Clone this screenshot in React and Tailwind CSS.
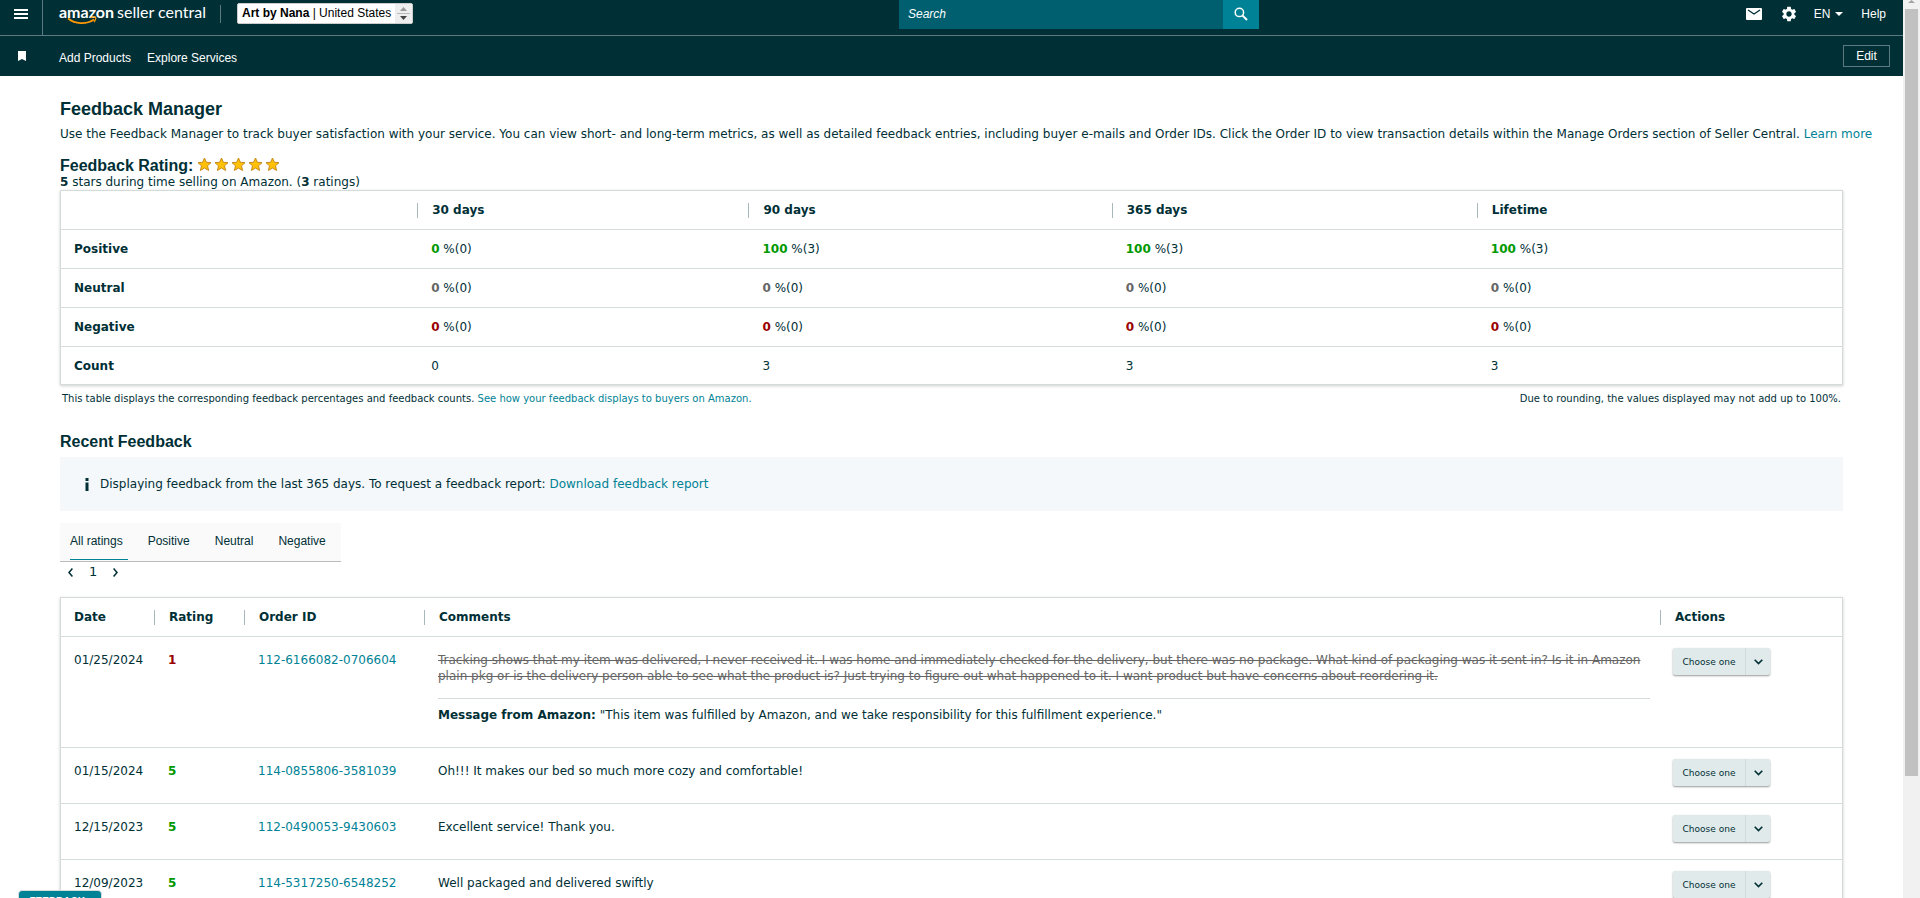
import React, { useState } from "react";
import { clsx } from "clsx";

const periods = ["30 days", "90 days", "365 days", "Lifetime"];

const metrics = [
  { label: "Positive", tone: "text-[#009900]", values: [["0", "0"], ["100", "3"], ["100", "3"], ["100", "3"]] },
  { label: "Neutral", tone: "text-[#666666]", values: [["0", "0"], ["0", "0"], ["0", "0"], ["0", "0"]] },
  { label: "Negative", tone: "text-[#990000]", values: [["0", "0"], ["0", "0"], ["0", "0"], ["0", "0"]] },
];

const counts = ["0", "3", "3", "3"];

const filters = ["All ratings", "Positive", "Neutral", "Negative"];

const feedback = [
  {
    date: "01/25/2024",
    rating: 1,
    order: "112-6166082-0706604",
    comment:
      "Tracking shows that my item was delivered, I never received it. I was home and immediately checked for the delivery, but there was no package. What kind of packaging was it sent in? Is it in Amazon plain pkg or is the delivery person able to see what the product is? Just trying to figure out what happened to it. I want product but have concerns about reordering it.",
    message: '"This item was fulfilled by Amazon, and we take responsibility for this fulfillment experience."',
  },
  { date: "01/15/2024", rating: 5, order: "114-0855806-3581039", comment: "Oh!!! It makes our bed so much more cozy and comfortable!" },
  { date: "12/15/2023", rating: 5, order: "112-0490053-9430603", comment: "Excellent service! Thank you." },
  { date: "12/09/2023", rating: 5, order: "114-5317250-6548252", comment: "Well packaged and delivered swiftly" },
];

function Logo() {
  return (
    <a href="#" aria-label="amazon seller central" className="relative flex items-baseline gap-[3px] h-6 text-white text-[16px] leading-6 font-['Lato',sans-serif]">
      <span className="font-bold">amazon</span>
      <span>seller central</span>
      <svg className="absolute left-2 top-4 w-8 h-2.5" viewBox="0 0 32 10" fill="none" stroke="#ff9900">
        <path d="M1 2.5C8 8 19 9 27 3.5" strokeWidth="1.6" />
        <path d="M23.5 1.6C26 .8 28 .8 28.5 1.6C29 2.5 28.2 4.6 27 6" strokeWidth="1.3" />
      </svg>
    </a>
  );
}

function Header() {
  return (
    <header className="bg-[#002f36] text-white text-[12px] font-['Liberation_Sans',Arial,sans-serif]">
      <div className="flex h-9 border-b border-[#5c7a7f]">
        <div className="flex w-[899px] shrink">
          <button aria-label="Menu" className="flex flex-col items-center justify-center gap-[2px] w-[43px] pb-2 border-r border-[#5c7a7f]">
            <span className="w-3.5 h-[2px] bg-white" />
            <span className="w-3.5 h-[2px] bg-white" />
            <span className="w-3.5 h-[2px] bg-white" />
          </button>
          <div className="flex items-start pl-4">
            <Logo />
            <span className="ml-3.5 mt-[5px] w-px h-[18px] bg-[#5c7a7f]" />
            <button className="ml-4 mt-[3px] flex items-stretch h-[21px] bg-white text-black rounded-[2px] border border-[#cccccc] overflow-hidden whitespace-nowrap">
              <span className="px-1 leading-[19px]">
                <b>Art by Nana</b> | United States
              </span>
              <span className="flex flex-col items-center justify-center w-[17px] bg-[#eeeeee]">
                <svg className="w-[13px] h-[15px]" viewBox="0 0 13 15">
                  <path d="M3 5L6.5 1L10 5Z" fill="#999" />
                  <path d="M0 7.5H13" stroke="#bbb" />
                  <path d="M3 10L6.5 14L10 10Z" fill="#444" />
                </svg>
              </span>
            </button>
          </div>
        </div>

        <form className="flex w-[360px] h-[29px] shrink-0">
          <input
            type="text"
            aria-label="Search"
            placeholder="Search"
            className="flex-1 min-w-0 pl-[9px] pb-[2px] bg-[#005f6e] italic placeholder:text-white outline-none"
          />
          <button type="button" aria-label="Submit search" className="flex items-center justify-center w-9 pb-[2px] bg-[#008296]">
            <svg className="w-3.5 h-3.5" viewBox="0 0 14 14" fill="none" stroke="white">
              <circle cx="5.4" cy="5.4" r="4.2" strokeWidth="1.5" />
              <path d="M8.6 8.6L13 13" strokeWidth="2" />
            </svg>
          </button>
        </form>

        <div className="flex items-center h-[28px] ml-auto pr-[17px]">
          <a href="#" aria-label="Messages">
            <svg className="w-4 h-3" viewBox="0 0 16 12">
              <rect width="16" height="12" rx="1" fill="white" />
              <path d="M2 2L8 6L14 2" fill="none" stroke="#002f36" strokeWidth="1.3" />
            </svg>
          </a>
          <a href="#" aria-label="Settings" className="ml-[18px]">
            <svg className="w-[18px] h-[18px]" viewBox="0 0 24 24" fill="white">
              <path d="M19.14 12.94c.04-.3.06-.61.06-.94 0-.32-.02-.64-.07-.94l2.03-1.58c.18-.14.23-.41.12-.61l-1.92-3.32c-.12-.22-.37-.29-.59-.22l-2.39.96c-.5-.38-1.03-.7-1.62-.94l-.36-2.54c-.04-.24-.24-.41-.48-.41h-3.84c-.24 0-.43.17-.47.41l-.36 2.54c-.59.24-1.13.57-1.62.94l-2.39-.96c-.22-.08-.47 0-.59.22L2.74 8.87c-.12.21-.08.47.12.61l2.03 1.58c-.05.3-.09.63-.09.94s.02.64.07.94l-2.03 1.58c-.18.14-.23.41-.12.61l1.92 3.32c.12.22.37.29.59.22l2.39-.96c.5.38 1.03.7 1.62.94l.36 2.54c.05.24.24.41.48.41h3.84c.24 0 .44-.17.47-.41l.36-2.54c.59-.24 1.13-.56 1.62-.94l2.39.96c.22.08.47 0 .59-.22l1.92-3.32c.12-.22.07-.47-.12-.61l-2.01-1.58zM12 15.6c-1.98 0-3.6-1.62-3.6-3.6s1.62-3.6 3.6-3.6 3.6 1.62 3.6 3.6-1.62 3.6-3.6 3.6z" />
            </svg>
          </a>
          <button className="ml-4 flex items-center gap-[5px]">
            EN
            <svg className="w-2 h-1" viewBox="0 0 8 4" fill="white">
              <path d="M0 0H8L4 4Z" />
            </svg>
          </button>
          <a href="#" className="ml-[18px]">Help</a>
        </div>
      </div>

      <div className="flex items-center h-10 pr-[13px]">
        <button aria-label="Bookmarks" className="w-[43px] flex justify-center">
          <svg className="w-2 h-2.5" viewBox="0 0 8 10" fill="white">
            <path d="M0 0H8V10L4 8L0 10Z" />
          </svg>
        </button>
        <nav className="flex gap-4 pl-4 pt-1">
          <a href="#">Add Products</a>
          <a href="#">Explore Services</a>
        </nav>
        <button className="ml-auto w-[47px] h-[22px] border border-[#5c7a7f]">Edit</button>
      </div>
    </header>
  );
}

function Star() {
  return (
    <svg className="w-[15px] h-[15px]" viewBox="0 0 15 15">
      <path
        d="M7.5 1L9.4 5.3L14 5.7L10.5 8.8L11.6 13.5L7.5 11L3.4 13.5L4.5 8.8L1 5.7L5.6 5.3Z"
        fill="#ffc107"
        stroke="#c98a1b"
        strokeLinejoin="round"
      />
    </svg>
  );
}

function HeadCell({ children, className, first }) {
  return (
    <th scope="col" className={clsx("h-[38px] p-0 text-left font-bold", className)}>
      <div className={clsx("flex items-center h-[15px] leading-[15px]", first ? "pl-[13px]" : "pl-[14px] border-l border-[#a9b8ba]")}>{children}</div>
    </th>
  );
}

function RatingSummary() {
  return (
    <table className="w-full table-fixed border border-[#d5dbdb] shadow-[0_1px_3px_rgba(0,0,0,0.2)] border-separate border-spacing-0">
      <thead>
        <tr>
          <th className="w-[20%]" />
          <HeadCell className="w-[18.6%]">{periods[0]}</HeadCell>
          <HeadCell className="w-[20.4%]">{periods[1]}</HeadCell>
          <HeadCell className="w-[20.5%]">{periods[2]}</HeadCell>
          <HeadCell>{periods[3]}</HeadCell>
        </tr>
      </thead>
      <tbody>
        {metrics.map((m) => (
          <tr key={m.label}>
            <th scope="row" className="h-[39px] pl-[13px] text-left font-bold border-t border-[#d5dbdb]">{m.label}</th>
            {m.values.map(([pct, n], i) => (
              <td key={i} className="pl-[14px] border-t border-[#d5dbdb]">
                <b className={m.tone}>{pct}</b> %({n})
              </td>
            ))}
          </tr>
        ))}
        <tr>
          <th scope="row" className="h-[38px] pl-[13px] text-left font-bold border-t border-[#d5dbdb]">Count</th>
          {counts.map((c, i) => (
            <td key={i} className="pl-[14px] border-t border-[#d5dbdb]">{c}</td>
          ))}
        </tr>
      </tbody>
    </table>
  );
}

function ActionButton() {
  return (
    <div className="inline-flex h-[27px] rounded-[2px] bg-[#e1eaea] shadow-[0_1px_2px_rgba(0,0,0,0.4)] text-[9px] align-top">
      <button className="w-[72px] text-center">Choose one</button>
      <button aria-label="Show actions" className="flex items-center justify-center w-[25px] border-l border-[#cfdada]">
        <svg className="w-[9px] h-[6px]" viewBox="0 0 9 6" fill="none" stroke="#002f36" strokeWidth="1.6">
          <path d="M.7 .8L4.5 4.6L8.3 .8" />
        </svg>
      </button>
    </div>
  );
}

function FeedbackTable() {
  return (
    <table className="w-full table-fixed border border-[#d5dbdb] shadow-[0_1px_3px_rgba(0,0,0,0.2)] border-separate border-spacing-0">
      <thead>
        <tr>
          <HeadCell first className="w-[93px]">Date</HeadCell>
          <HeadCell className="w-[90px]">Rating</HeadCell>
          <HeadCell className="w-[180px]">Order ID</HeadCell>
          <HeadCell>Comments</HeadCell>
          <HeadCell className="w-[182px]">Actions</HeadCell>
        </tr>
      </thead>
      <tbody className="align-top">
        {feedback.map((f) => (
          <tr key={f.order}>
            <td className="pt-[15px] pl-[13px] border-t border-[#d5dbdb]">{f.date}</td>
            <td className={clsx("pt-[15px] pl-[14px] border-t border-[#d5dbdb] font-bold", f.rating > 3 ? "text-[#009900]" : "text-[#990000]")}>{f.rating}</td>
            <td className="pt-[15px] pl-[14px] border-t border-[#d5dbdb]">
              <a href="#" className="text-[#008296]">{f.order}</a>
            </td>
            <td className="pt-[15px] pl-[14px] pr-[10px] border-t border-[#d5dbdb]">
              {f.message ? (
                <>
                  <p className="line-through text-[#666666]">{f.comment}</p>
                  <p className="mt-3.5 pt-2 pb-6 border-t border-[#d5dbdb]">
                    <b>Message from Amazon:</b> {f.message}
                  </p>
                </>
              ) : (
                <p>{f.comment}</p>
              )}
            </td>
            <td className="pt-[11px] pb-[17px] pl-[13px] border-t border-[#d5dbdb]">
              <ActionButton />
            </td>
          </tr>
        ))}
      </tbody>
    </table>
  );
}

export default function App() {
  const [filter, setFilter] = useState("All ratings");

  return (
    <div className="flex h-screen overflow-hidden bg-white text-[#002f36] text-[12px] leading-4 font-['DejaVu_Sans',Verdana,sans-serif]">
      <div className="flex-1 min-w-0">
        <Header />

        <main className="px-[60px]">
          <h1 className="pt-[22px] text-[18px] leading-[22px] font-bold font-['Liberation_Sans',Arial,sans-serif]">Feedback Manager</h1>
          <p className="mt-1.5 whitespace-nowrap">
            Use the Feedback Manager to track buyer satisfaction with your service. You can view short- and long-term metrics, as well as detailed feedback entries, including buyer e-mails and Order IDs. Click the Order ID to view transaction details within the Manage Orders section of Seller Central.{" "}
            <a href="#" className="text-[#008296]">Learn more</a>
          </p>

          <div className="flex items-start gap-1 mt-[15px]">
            <h2 className="text-[16px] leading-[18px] font-bold font-['Liberation_Sans',Arial,sans-serif]">Feedback Rating:</h2>
            <div role="img" aria-label="5 stars" className="flex gap-[2px]">
              <Star />
              <Star />
              <Star />
              <Star />
              <Star />
            </div>
          </div>
          <p className="leading-[15px]">
            <b>5</b> stars during time selling on Amazon. (<b>3</b> ratings)
          </p>
          <RatingSummary />
          <div className="flex justify-between px-[2px] mt-[6px] text-[10px]">
            <p>
              This table displays the corresponding feedback percentages and feedback counts.{" "}
              <a href="#" className="text-[#008296]">See how your feedback displays to buyers on Amazon.</a>
            </p>
            <p>Due to rounding, the values displayed may not add up to 100%.</p>
          </div>

          <h2 className="mt-[26px] text-[16px] leading-[18px] font-bold font-['Liberation_Sans',Arial,sans-serif]">Recent Feedback</h2>
          <div className="flex items-center gap-[11px] h-[54px] mt-[6px] pl-[25px] bg-[#f4f8fa]">
            <svg className="w-1 h-[13px]" viewBox="0 0 4 13" fill="#002f36">
              <path d="M.5 0H3.5V3H.5ZM.5 4.5H3.5V13H.5Z" />
            </svg>
            <p>
              Displaying feedback from the last 365 days. To request a feedback report:{" "}
              <a href="#" className="text-[#008296]">Download feedback report</a>
            </p>
          </div>

          <div role="tablist" className="inline-flex gap-5 h-[39px] mt-3 px-[10px] bg-[#fafafa] border-b border-[#b8bcbc] text-[12px] font-['Liberation_Sans',Arial,sans-serif] align-top">
            {filters.map((name) => (
              <button
                key={name}
                role="tab"
                aria-selected={filter === name}
                onClick={() => setFilter(name)}
                className={clsx("h-[37px] pr-[5px] border-b", filter === name ? "border-[#008296]" : "border-transparent")}
              >
                {name}
              </button>
            ))}
          </div>

          <div className="flex items-center h-5 pl-2 gap-4 text-[13px]">
            <button aria-label="Previous page">
              <svg className="w-[5px] h-[9px]" viewBox="0 0 5 9" fill="none" stroke="#002f36" strokeWidth="1.5">
                <path d="M4.4 .6L1 4.5L4.4 8.4" />
              </svg>
            </button>
            <span>1</span>
            <button aria-label="Next page">
              <svg className="w-[5px] h-[9px]" viewBox="0 0 5 9" fill="none" stroke="#002f36" strokeWidth="1.5">
                <path d="M.6 .6L4 4.5L.6 8.4" />
              </svg>
            </button>
          </div>

          <div className="mt-[15px]">
            <FeedbackTable />
          </div>
        </main>
      </div>

      {/* Scrollbar */}
      <div className="flex flex-col items-center w-[17px] bg-[#f1f1f1]">
        <svg className="w-[7px] h-[9px]" viewBox="0 0 7 9" fill="#a3a3a3">
          <path d="M0 3L3.5 0L7 3Z" />
        </svg>
        <div className="w-[13px] h-[767px] bg-[#c1c1c1]" />
      </div>

      <button className="fixed left-[18px] -bottom-4 flex items-center justify-end gap-[3px] w-[84px] h-6 pr-1 rounded-t-[4px] border border-[#d5dbdb] bg-[#008296] text-white text-[10px] font-bold font-['Liberation_Sans',Arial,sans-serif]">
        FEEDBACK
        <svg className="w-[9px] h-[6px]" viewBox="0 0 9 6" fill="none" stroke="white" strokeWidth="1.5">
          <path d="M.7 5L4.5 1.2L8.3 5" />
        </svg>
      </button>
    </div>
  );
}
